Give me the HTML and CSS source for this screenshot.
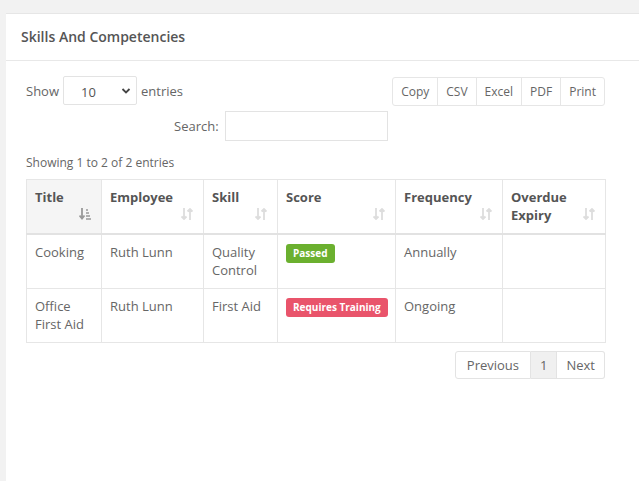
FILE: index.html
```html
<!DOCTYPE html>
<html lang="en">
<head>
    <meta charset="UTF-8">
    <meta name="viewport" content="width=device-width, initial-scale=1.0">
    <title>Skills And Competencies</title>
    <link rel="stylesheet" href="styles.css">
</head>
<body>
    <div class="card">
        <div class="card-header">Skills And Competencies</div>

        <div class="card-body">
            <div class="dt-top">
                <div class="dt-length">
                    Show
                    <div class="select-box">
                        <span>10</span>
                        <svg width="10" height="8" viewBox="0 0 10 8"><path d="M1.5 2 L5 5.5 L8.5 2" fill="none" stroke="#444" stroke-width="1.8"/></svg>
                    </div>
                    entries
                </div>
                <div class="dt-buttons">
                    <span class="dt-btn">Copy</span>
                    <span class="dt-btn">CSV</span>
                    <span class="dt-btn">Excel</span>
                    <span class="dt-btn">PDF</span>
                    <span class="dt-btn">Print</span>
                </div>
            </div>

            <div class="dt-search">
                <label>Search:</label>
                <div class="search-input"></div>
            </div>

            <div class="dt-info">Showing 1 to 2 of 2 entries</div>

            <table class="dt-table">
                <colgroup>
                    <col style="width: 75px">
                    <col style="width: 102px">
                    <col style="width: 74px">
                    <col style="width: 118px">
                    <col style="width: 107px">
                    <col style="width: 103px">
                </colgroup>
                <thead>
                    <tr>
                        <th class="sorted">Title
                            <svg class="sort-icon" width="12" height="12" viewBox="0 0 12 12"><path d="M3 0 V10 M0.5 7.5 L3 10.5 L5.5 7.5" fill="none" stroke="#999" stroke-width="1.8"/><path d="M7 2 H9 M7 5 H10 M7 8 H11 M7 11 H12" stroke="#999" stroke-width="1.6"/></svg>
                        </th>
                        <th>Employee <svg class="sort-icon" width="12" height="12" viewBox="0 0 12 12"><path d="M3 0 V11 M0.5 8.5 L3 11 L5.5 8.5 M9 12 V1 M6.5 3.5 L9 1 L11.5 3.5" fill="none" stroke="#ddd" stroke-width="1.8"/></svg></th>
                        <th>Skill <svg class="sort-icon" width="12" height="12" viewBox="0 0 12 12"><path d="M3 0 V11 M0.5 8.5 L3 11 L5.5 8.5 M9 12 V1 M6.5 3.5 L9 1 L11.5 3.5" fill="none" stroke="#ddd" stroke-width="1.8"/></svg></th>
                        <th>Score <svg class="sort-icon" width="12" height="12" viewBox="0 0 12 12"><path d="M3 0 V11 M0.5 8.5 L3 11 L5.5 8.5 M9 12 V1 M6.5 3.5 L9 1 L11.5 3.5" fill="none" stroke="#ddd" stroke-width="1.8"/></svg></th>
                        <th>Frequency <svg class="sort-icon" width="12" height="12" viewBox="0 0 12 12"><path d="M3 0 V11 M0.5 8.5 L3 11 L5.5 8.5 M9 12 V1 M6.5 3.5 L9 1 L11.5 3.5" fill="none" stroke="#ddd" stroke-width="1.8"/></svg></th>
                        <th>Overdue Expiry <svg class="sort-icon" width="12" height="12" viewBox="0 0 12 12"><path d="M3 0 V11 M0.5 8.5 L3 11 L5.5 8.5 M9 12 V1 M6.5 3.5 L9 1 L11.5 3.5" fill="none" stroke="#ddd" stroke-width="1.8"/></svg></th>
                    </tr>
                </thead>
                <tbody>
                    <tr>
                        <td>Cooking</td>
                        <td>Ruth Lunn</td>
                        <td>Quality Control</td>
                        <td><span class="badge badge-pass">Passed</span></td>
                        <td>Annually</td>
                        <td></td>
                    </tr>
                    <tr>
                        <td>Office First Aid</td>
                        <td>Ruth Lunn</td>
                        <td>First Aid</td>
                        <td><span class="badge badge-fail">Requires Training</span></td>
                        <td>Ongoing</td>
                        <td></td>
                    </tr>
                </tbody>
            </table>

            <div class="dt-paging">
                <span class="page-btn">Previous</span>
                <span class="page-btn current">1</span>
                <span class="page-btn">Next</span>
            </div>
        </div>
    </div>
</body>
</html>
```

FILE: styles.css
```css
/* Page */
body {
    margin: 0;
    padding: 13px 0 0 6px;
    background-color: #f2f2f2;
    font-family: 'Open Sans', Arial, sans-serif;
    color: #666;
}

/* Card */
.card {
    background-color: #fff;
    border-top: 1px solid #e6e6e6;
    min-height: 467px;
}

.card-header {
    height: 47px;
    display: flex;
    align-items: center;
    padding-left: 15px;
    padding-bottom: 2px;
    box-sizing: border-box;
    font-size: 14px;
    font-weight: 600;
    color: #555;
    border-bottom: 1px solid #e8e8e8;
}

.card-body {
    width: 579px;
    padding: 15px 20px 0 20px;
}

/* Top controls */
.dt-top {
    display: flex;
    justify-content: space-between;
    align-items: flex-start;
}

.dt-length {
    display: flex;
    align-items: center;
    gap: 4px;
    font-size: 13px;
    color: #666;
    margin-top: 0;
}

.select-box {
    height: 27px;
    border: 1px solid #e3e3e3;
    border-radius: 2px;
    display: flex;
    align-items: center;
    justify-content: space-between;
    padding: 0 0 0 17px;
    width: 55px;
    font-size: 13px;
    color: #555;
}

.select-box span {
    margin-top: 3px;
}

.select-box svg {
    margin-right: 5px;
}

.dt-buttons {
    display: flex;
    margin-top: 1px;
    border: 1px solid #e6e6e6;
    border-radius: 3px;
}

.dt-btn {
    height: 27px;
    display: flex;
    align-items: center;
    padding: 0 8px;
    font-size: 12px;
    color: #666;
    border-left: 1px solid #e6e6e6;
}

.dt-btn:first-child {
    border-left: none;
}

/* Search */
.dt-search {
    display: flex;
    align-items: center;
    gap: 6px;
    margin-left: 148px;
    margin-top: 5px;
    font-size: 13px;
}

.search-input {
    width: 161px;
    height: 28px;
    border: 1px solid #e3e3e3;
}

.dt-info {
    font-size: 12px;
    color: #666;
    margin-top: 13px;
    height: 18px;
}

/* Table */
.dt-table {
    width: 579px;
    margin-top: 7px;
    border-collapse: collapse;
    table-layout: fixed;
    font-size: 13px;
}

.dt-table th,
.dt-table td {
    border: 1px solid #e6e6e6;
    padding: 8px 8px 9px 8px;
    line-height: 18px;
    vertical-align: top;
    text-align: left;
}

.dt-table th {
    position: relative;
    font-weight: 700;
    color: #555;
    padding-right: 26px;
    border-bottom: 2px solid #e2e2e2;
}

.dt-table th.sorted {
    background-color: #f5f5f5;
}

.dt-table td {
    color: #666;
    height: 36px;
}

.sort-icon {
    position: absolute;
    right: 10px;
    top: 28px;
}

.badge {
    display: inline-block;
    white-space: nowrap;
    font-size: 10px;
    font-weight: 700;
    color: #fff;
    padding: 2px 7px;
    line-height: 15px;
    border-radius: 3px;
    margin-top: 1px;
}

.badge-pass {
    background-color: #6bb02f;
}

.badge-fail {
    background-color: #e9546b;
}

/* Pagination */
.dt-paging {
    display: flex;
    justify-content: flex-end;
    margin-top: 8px;
}

.page-btn {
    height: 26px;
    display: flex;
    align-items: center;
    padding: 0 9px;
    font-size: 13px;
    color: #666;
    border: 1px solid #e3e3e3;
    border-left: none;
}

.page-btn:first-child {
    border-left: 1px solid #e3e3e3;
    border-radius: 3px 0 0 3px;
    padding: 0 11px;
}

.page-btn:last-child {
    border-radius: 0 3px 3px 0;
}

.page-btn.current {
    background-color: #f0f0f0;
}
```
